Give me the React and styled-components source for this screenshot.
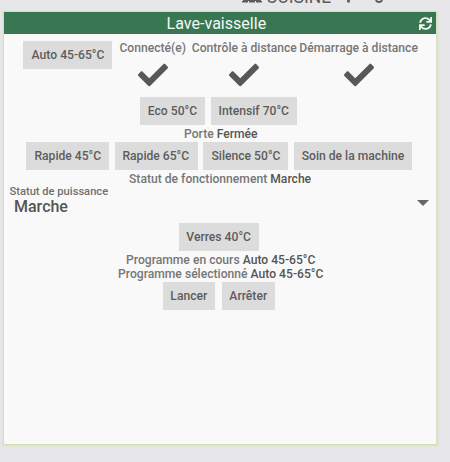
import React from "react";
import styled, { createGlobalStyle } from "styled-components";
import { FaCheck, FaSync } from "react-icons/fa";

const GlobalStyle = createGlobalStyle`
  * { box-sizing: border-box; }
  body {
    margin: 0;
    height: 462px;
    overflow: hidden;
    background: #e7e7e9;
    font-family: Roboto, "Liberation Sans", sans-serif;
  }
`;

const Page = styled.main`
  width: 450px;
  height: 462px;
  overflow: hidden;
  display: flex;
  flex-direction: column;
  padding-left: 3px;
`;

const RoomBar = styled.div`
  height: 11px;
  flex: none;
  display: flex;
  align-items: flex-start;
  padding-left: 239px;
  color: #5c5c5c;
`;

const RoomIcon = styled.svg`
  display: block;
  width: ${(p) => p.$w}px;
  height: 4px;
  flex: none;
  margin-left: ${(p) => p.$left || 0}px;
`;

const RoomName = styled.span`
  width: 68px;
  margin: -13px 0 0 4px;
  font-size: 17.5px;
  line-height: 20px;
  white-space: nowrap;
`;

const Card = styled.section`
  width: 435px;
  height: 434px;
  flex: none;
  background: #f9f9f9;
  border: 1px solid #d3e2b6;
  border-right: 2px solid #d9e4c6;
  border-bottom-color: #cfdfae;
  box-shadow: 0 1px 2px rgba(195, 220, 150, 0.45);
`;

const Header = styled.header`
  height: 22px;
  background: #387752;
  color: #f4f8f5;
  display: grid;
  grid-template-columns: 30px 1fr 24px;
  align-items: center;
  text-align: center;
`;

const Title = styled.h1`
  grid-column: 2;
  margin: 0;
  padding: 1px 14px 0 0;
  font-size: 17px;
  line-height: 21px;
  font-weight: 400;
  white-space: nowrap;
  transform: scaleX(0.945);
`;

const RefreshIcon = styled(FaSync)`
  width: 13px;
  height: 13px;
  margin-left: 7px;
  display: block;
`;

const Body = styled.div`
  padding-left: 1px;
`;

const Row = styled.div`
  display: flex;
  height: ${(p) => p.$h}px;
  margin-top: ${(p) => p.$top || 0}px;
  padding-left: ${(p) => p.$left || 0}px;
  gap: ${(p) => p.$gap ?? 6}px;
`;

const ActionBox = styled.button`
  width: ${(p) => p.$w}px;
  height: 28px;
  flex: none;
  display: flex;
  justify-content: center;
  padding: 1px 0 0;
  border: 0;
  background: #dcdcdc;
  color: #5c5c5c;
  font: 500 13px/26px Roboto, sans-serif;
  white-space: nowrap;
`;

const Narrow = styled.span`
  display: inline-block;
  flex: none;
  transform: scaleX(0.933);
`;

const Statuses = styled.div`
  display: flex;
  gap: 4px;
`;

const Status = styled.div`
  width: ${(p) => p.$w}px;
  flex: none;
  display: flex;
  flex-direction: column;
  align-items: center;
`;

const Name = styled.span`
  flex: none;
  font-size: 13px;
  line-height: 14px;
  font-weight: 500;
  color: #767676;
  white-space: nowrap;
  transform: scaleX(${(p) => p.$fit || 0.933});
  transform-origin: ${(p) => (p.$start ? "left" : "center")};
`;

const Value = styled.span`
  color: #555;
`;

const CheckIcon = styled(FaCheck)`
  width: 30px;
  height: 30px;
  margin-top: 5px;
  display: block;
  color: #585858;
`;

const Power = styled.div`
  height: 30px;
  padding: 0 0 0 4px;
  display: flex;
  flex-direction: column;
`;

const PowerName = styled.span`
  padding-left: 0.5px;
  font-size: 11.15px;
  line-height: 14px;
  font-weight: 500;
  color: #707070;
`;

const PowerSelect = styled.div`
  display: flex;
  align-items: center;
  justify-content: space-between;
  padding: 0 7px 0 5px;
  height: 16px;
  font-size: 16px;
  line-height: 16px;
  font-weight: 500;
  color: #555;
`;

const Caret = styled.svg`
  width: 12px;
  height: 6px;
  margin-top: -8px;
  display: block;
`;

const Action = ({ w, children }) => (
  <ActionBox $w={w}>
    <Narrow>{children}</Narrow>
  </ActionBox>
);

export default function App() {
  return (
    <>
      <GlobalStyle />
      <Page>
        <RoomBar>
          <RoomIcon $w={20} viewBox="0 0 20 4">
            <path d="M1 0H19V1H1Z M0 1H6V2.5H0Z M7 1H13V2.5H7Z M14 1H20V2.5H14Z" fill="#5c5c5c" />
          </RoomIcon>
          <RoomName>CUISINE</RoomName>
          <RoomIcon $w={5} $left={12} viewBox="0 0 5 4">
            <path d="M1 0H4V2Q2.5 3.5 1 2Z" fill="#666" />
          </RoomIcon>
          <RoomIcon $w={8} $left={24} viewBox="0 0 8 4">
            <path d="M1 0Q1.5 2 4 2T7 0" fill="none" stroke="#5c5c5c" strokeWidth="1.8" />
          </RoomIcon>
        </RoomBar>
        <Card>
          <Header>
            <Title>Lave-vaisselle</Title>
            <RefreshIcon />
          </Header>
          <Body>
            <Row $h={56} $top={7} $left={18}>
              <Action w={89}>Auto 45-65°C</Action>
              <Statuses>
                <Status $w={69}><Name>Connecté(e)</Name><CheckIcon /></Status>
                <Status $w={106}><Name>Contrôle à distance</Name><CheckIcon /></Status>
                <Status $w={116}><Name>Démarrage à distance</Name><CheckIcon /></Status>
              </Statuses>
            </Row>
            <Row $h={28} $left={135}>
              <Action w={65}>Eco 50°C</Action>
              <Action w={86}>Intensif 70°C</Action>
            </Row>
            <Row $h={15} $top={2} $left={179}>
              <Name $start>Porte <Value>Fermée</Value></Name>
            </Row>
            <Row $h={28} $left={21} $gap={5.5}>
              <Action w={83}>Rapide 45°C</Action>
              <Action w={83}>Rapide 65°C</Action>
              <Action w={85}>Silence 50°C</Action>
              <Action w={118}>Soin de la machine</Action>
            </Row>
            <Row $h={13} $top={2} $left={124}>
              <Name $start>Statut de fonctionnement <Value>Marche</Value></Name>
            </Row>
            <Power>
              <PowerName>Statut de puissance</PowerName>
              <PowerSelect>Marche<Caret viewBox="0 0 12 6"><path d="M0 0H12L6 6Z" fill="#666" /></Caret></PowerSelect>
            </Power>
            <Row $h={28} $top={8} $left={174}><Action w={80}>Verres 40°C</Action></Row>
            <Row $h={14} $top={2} $left={121}><Name $start>Programme en cours <Value>Auto 45-65°C</Value></Name></Row>
            <Row $h={14} $left={113}><Name $start>Programme sélectionné <Value>Auto 45-65°C</Value></Name></Row>
            <Row $h={28} $top={1} $left={158} $gap={7}>
              <Action w={52}>Lancer</Action>
              <Action w={53}>Arrêter</Action>
            </Row>
          </Body>
        </Card>
      </Page>
    </>
  );
}
